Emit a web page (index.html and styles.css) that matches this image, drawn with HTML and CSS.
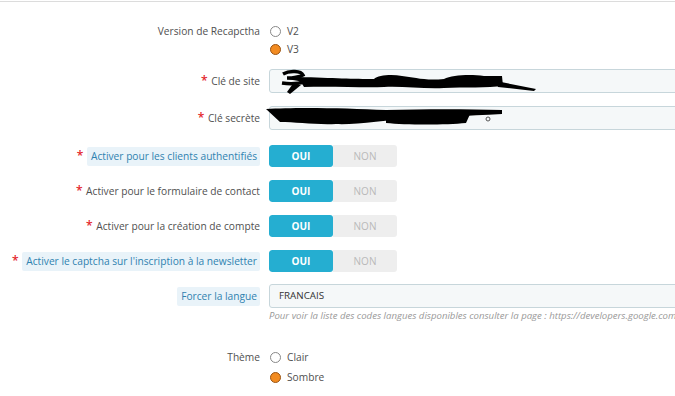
FILE: index.html
```html
<!DOCTYPE html>
<html lang="fr">
<head>
<meta charset="utf-8">
<link rel="stylesheet" href="styles.css">
</head>
<body>
<div class="panel">
  <div class="row row-version">
    <div class="label">Version de Recapctha</div>
    <div class="control radios">
      <label class="radio"><span class="dot"></span>V2</label>
      <label class="radio"><span class="dot on"></span>V3</label>
    </div>
  </div>

  <div class="row row-input">
    <div class="label"><span class="req">*</span> Clé de site</div>
    <div class="control">
      <div class="input">
        <svg class="scribble" width="270" height="26" viewBox="0 0 270 26">
          <path d="M9 5 C16 1 27 2 29 6 C25 8 17 9 13 9 C21 9 31 11 31 13 C23 15 14 15 8 14" fill="none" stroke="#000" stroke-width="3.4"/>
          <path d="M18 16 L27 16 L16 25 L13 23 Z" fill="#000"/>
          <path d="M24 8 C60 9 80 10 100 10 C104 6 118 5 128 7 C140 8 150 12 170 10 C178 6 196 5 210 7 L228 7 L229 17 C214 19 190 18 170 19 C150 20 128 17 110 18 C90 19 60 17 30 18 Z" fill="#000"/>
          <path d="M222 12 L262 20 L260 22 L224 18 Z" fill="#000"/>
        </svg>
      </div>
    </div>
  </div>

  <div class="row row-input row-input2">
    <div class="label"><span class="req">*</span> Clé secrète</div>
    <div class="control">
      <div class="input">
        <svg class="scribble scribble2" width="250" height="26" viewBox="0 0 250 26">
          <path d="M0 4 C30 2 80 3 120 5 C160 4 200 4 236 5 L236 9 C200 11 170 12 150 13 C120 15 90 20 70 19 C50 20 30 17 14 17 Z" fill="#000"/>
          <path d="M120 8 L205 7 L200 18 C180 20 140 20 120 18 Z" fill="#000"/>
          <circle cx="222" cy="14" r="2" fill="none" stroke="#555" stroke-width="1"/>
        </svg>
      </div>
    </div>
  </div>

  <div class="row row-toggle first-toggle">
    <div class="label"><span class="req">*</span> <span class="tip">Activer pour les clients authentifiés</span></div>
    <div class="control"><div class="toggle"><span class="yes">OUI</span><span class="no">NON</span></div></div>
  </div>

  <div class="row row-toggle">
    <div class="label"><span class="req">*</span> Activer pour le formulaire de contact</div>
    <div class="control"><div class="toggle"><span class="yes">OUI</span><span class="no">NON</span></div></div>
  </div>

  <div class="row row-toggle">
    <div class="label"><span class="req">*</span> Activer pour la création de compte</div>
    <div class="control"><div class="toggle"><span class="yes">OUI</span><span class="no">NON</span></div></div>
  </div>

  <div class="row row-toggle">
    <div class="label"><span class="req">*</span> <span class="tip">Activer le captcha sur l'inscription à la newsletter</span></div>
    <div class="control"><div class="toggle"><span class="yes">OUI</span><span class="no">NON</span></div></div>
  </div>

  <div class="row row-lang">
    <div class="label"><span class="tip">Forcer la langue</span></div>
    <div class="control">
      <div class="input input-text">FRANCAIS</div>
      <p class="help">Pour voir la liste des codes langues disponibles consulter la page : https://developers.google.com/recaptcha/docs/language</p>
    </div>
  </div>

  <div class="row row-theme">
    <div class="label">Thème</div>
    <div class="control radios theme">
      <label class="radio"><span class="dot"></span>Clair</label>
      <label class="radio"><span class="dot on"></span>Sombre</label>
    </div>
  </div>
</div>
</body>
</html>
```

FILE: styles.css
```css
html, body {
  margin: 0;
  padding: 0;
  background: #fff;
  overflow: hidden;
}
body {
  font-family: "Open Sans", "Liberation Sans", sans-serif;
  font-size: 10.2px;
  color: #555;
}
.panel {
  margin-top: 1px;
  border-top: 1px solid #dcdcdc;
  padding-top: 20px;
  width: 900px;
}
.row {
  display: grid;
  grid-template-columns: 260px 560px;
  column-gap: 9px;
  align-items: start;
}
.label {
  text-align: right;
  white-space: nowrap;
  color: #505050;
}
.req {
  color: #e3242b;
  font-size: 12px;
  font-weight: 600;
  line-height: 0;
  margin-right: 1px;
}
.tip {
  background: #e9f3f9;
  color: #2f82b0;
  padding: 2px 3px 3px 4px;
  border-radius: 2px;
}
.radios {
  display: flex;
  flex-direction: column;
}
.radio {
  display: flex;
  align-items: center;
  gap: 6px;
  height: 18px;
  color: #505050;
}
.row-version .label {
  line-height: 18px;
  height: 18px;
}
.dot {
  width: 9px;
  height: 9px;
  border: 1px solid #888;
  border-radius: 50%;
  background: #fff;
  box-sizing: content-box;
  margin-left: 1px;
}
.dot.on {
  background: #f28b21;
  border-color: #9a5312;
}
.row-input {
  margin-top: 11px;
}
.row-input2 {
  margin-top: 13px;
}
.row-input .label,
.row-lang .label {
  line-height: 24px;
  height: 24px;
}
.input {
  position: relative;
  height: 22px;
  border: 1px solid #c7d6db;
  border-radius: 3px;
  background: #f5f8f9;
  width: 520px;
}
.scribble {
  position: absolute;
  left: 4px;
  top: -1px;
}
.scribble2 {
  left: -4px;
  top: -2px;
}
.row-toggle {
  margin-top: 13px;
}
.first-toggle {
  margin-top: 15px;
}
.row-toggle .label {
  line-height: 22px;
  height: 22px;
}
.toggle {
  display: flex;
  width: 128px;
  height: 22px;
  border-radius: 3px;
  overflow: hidden;
  font-size: 10px;
  line-height: 22px;
  text-align: center;
}
.yes {
  flex: 0 0 64px;
  background: #25aed1;
  color: #fff;
  font-weight: 700;
  border-radius: 3px;
}
.no {
  flex: 1;
  background: #eeeeee;
  color: #b9b9b9;
}
.row-lang {
  margin-top: 12px;
}
.input-text {
  color: #333;
  font-size: 9.8px;
  line-height: 22px;
  padding-left: 9px;
}
.help {
  margin: 2px 0 0;
  font-size: 9.6px;
  line-height: 12px;
  font-style: italic;
  color: #999;
  white-space: nowrap;
}
.row-theme {
  margin-top: 25px;
}
.row-theme .label {
  line-height: 20px;
  height: 20px;
}
.theme .radio {
  height: 20px;
}
```
